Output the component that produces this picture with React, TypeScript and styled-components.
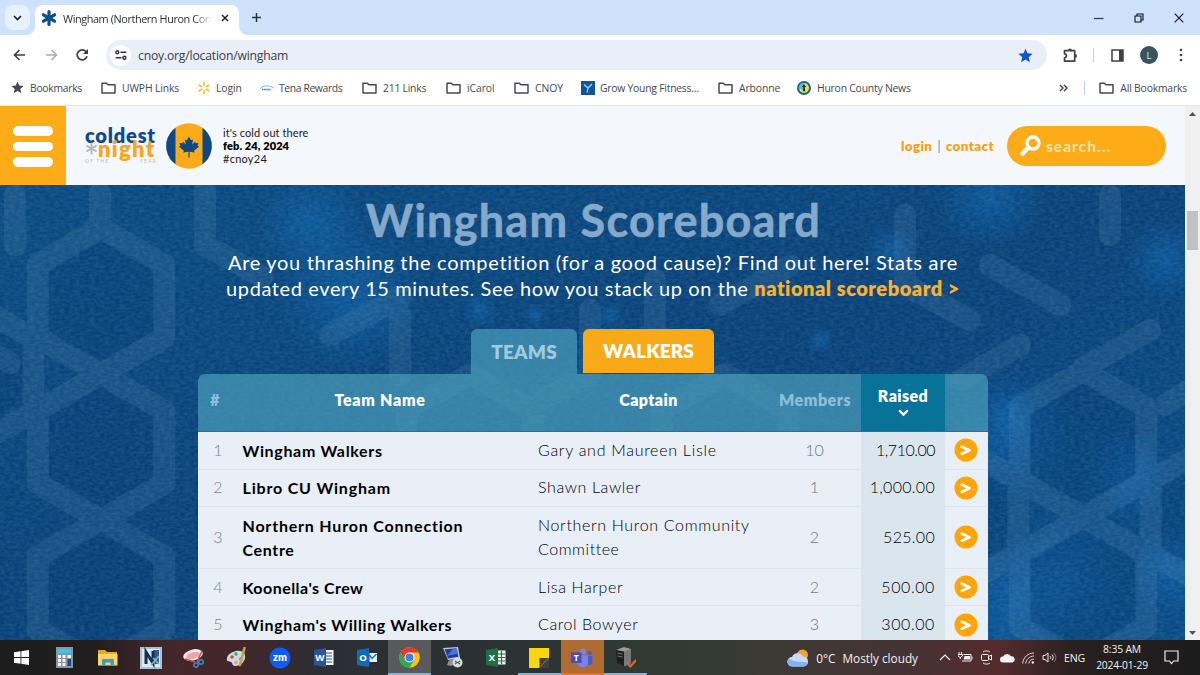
import React from "react";
import styled, { createGlobalStyle } from "styled-components";

const Global = createGlobalStyle`
  * { box-sizing: border-box; }
  body { margin: 0; overflow: hidden; font-family: "Open Sans", "Noto Sans", sans-serif; }
  svg { display: block; flex: none; }
`;

const Screen = styled.div`
  width: 1200px; height: 675px; display: flex; flex-direction: column; overflow: hidden; background: #fff;
`;
const Label = styled.span<{ $ls?: number }>`
  letter-spacing: ${(p) => p.$ls ?? 0}px; white-space: nowrap;
`;

/* ---------- browser chrome ---------- */
const TabStrip = styled.div`
  height: 35px; flex: none; background: #cee2fc; display: flex; align-items: flex-end; padding-left: 5px;
`;
const TabSearch = styled.div`
  width: 25px; height: 25px; margin-bottom: 5px; border-radius: 8px; background: #e8f1fe;
  display: flex; align-items: center; justify-content: center;
`;
const BrowserTab = styled.div`
  position: relative; margin-left: 5px; width: 204px; height: 30px; border-radius: 8px 8px 0 0; background: #fff;
  display: flex; align-items: center; padding: 0 10px 4px 6px;
  &::before, &::after {
    content: ""; position: absolute; bottom: 0; width: 8px; height: 8px;
  }
  &::before { left: -8px; background: radial-gradient(circle at 0 0, transparent 7.5px, #fff 8px); }
  &::after { right: -8px; background: radial-gradient(circle at 100% 0, transparent 7.5px, #fff 8px); }
`;
const TabTitle = styled.div`
  margin-left: 6px; width: 149px; white-space: nowrap; font-size: 10.9px; color: #2b2f33;
  mask-image: linear-gradient(90deg, #000 88%, transparent 100%);
`;
const TabClose = styled.div` margin-left: auto; `;
const NewTab = styled.div` margin: 0 0 12px 12px; `;
const WindowButtons = styled.div`
  margin-left: auto; display: flex; gap: 30px; align-items: center; padding: 0 16px 12px 0;
`;

const Toolbar = styled.div`
  height: 35px; flex: none; display: flex; align-items: center; padding: 5px 17px 0 12px;
`;
const NavButtons = styled.div` display: flex; gap: 15.5px; width: 94px; align-items: center; `;
const Omnibox = styled.div`
  width: 941px; flex: none; height: 30px; border-radius: 15px; background: #e9eef8; display: flex; align-items: center;
  padding: 0 14px 0 4px; font-size: 12.2px; color: #3c4045;
`;
const SiteInfo = styled.div`
  width: 21px; height: 21px; border-radius: 50%; background: #fff; display: flex; align-items: center;
  justify-content: center; margin-right: 7px;
`;
const StarSlot = styled.div` margin-left: auto; `;
const ToolIcons = styled.div` margin-left: auto; display: flex; align-items: center; `;
const Sep = styled.div<{ $l: number; $r: number }>`
  width: 1px; height: 14px; background: #b9d5f5; margin: 0 ${(p) => p.$r}px 0 ${(p) => p.$l}px;
`;
const Avatar = styled.div`
  width: 18px; height: 18px; border-radius: 50%; background: #37555e; color: #dfe9ec; font-size: 9.5px;
  display: flex; align-items: center; justify-content: center; margin: 0 21px 0 16px;
`;

const BookmarkBar = styled.div`
  height: 36px; flex: none; display: flex; align-items: center; padding: 0 13px 0 11px;
  border-bottom: 1px solid #e3e5e8; font-size: 10.4px; color: #45494d;
`;
const Bookmark = styled.div<{ $w?: number; $gap?: number }>`
  width: ${(p) => (p.$w ? p.$w + "px" : "auto")}; display: flex; align-items: center; gap: ${(p) => p.$gap ?? 6}px;
`;
const BookmarkEnd = styled.div` margin-left: auto; display: flex; align-items: center; `;

/* ---------- web page ---------- */
const Viewport = styled.div` height: 534px; flex: none; display: flex; overflow: hidden; `;
const Page = styled.div` position: relative; width: 1185px; height: 534px; overflow: hidden; `;
const Backdrop = styled.svg` position: absolute; left: 0; top: 79px; `;
const Scrollbar = styled.div`
  width: 15px; background: #f0f0f0; display: flex; flex-direction: column; align-items: center; padding: 6px 0 5px;
`;
const Thumb = styled.div` width: 11px; height: 39px; margin-top: 95px; margin-bottom: auto; background: #c1c1c1; `;

const SiteHeader = styled.header`
  position: relative; height: 79px; background: #f4f7fb; display: flex; align-items: center; padding-right: 19px;
  font-family: Lato, sans-serif;
`;
const MenuButton = styled.div`
  width: 66px; height: 79px; background: #fdac17; display: flex; flex-direction: column; align-items: center;
  gap: 6px; padding-top: 20px;
`;
const MenuBar = styled.div` width: 40px; height: 9.5px; border-radius: 5px; background: #fff; `;
const Logo = styled.div`
  margin-left: 19px; width: 72px; height: 44px; display: flex; flex-direction: column;
`;
const LogoTop = styled.div`
  font-size: 20px; line-height: 22px; height: 17px; font-weight: 800; color: #0d4a8b;
`;
const LogoMid = styled.div`
  height: 16px; display: flex; align-items: center; font-size: 22px; line-height: 16px; font-weight: 800; color: #f9a61d;
`;
const LogoSub = styled.div`
  display: flex; justify-content: space-between; font-size: 4.8px; line-height: 8px; color: #b9bcc0;
`;
const Flag = styled.svg` margin-left: 9px; `;
const Tagline = styled.div`
  margin-left: 11px; font-size: 11px; line-height: 13px; color: #1b1b1b; display: flex; flex-direction: column;
  b { font-weight: 800; color: #000; }
`;
const Account = styled.div`
  margin-left: auto; display: flex; gap: 5px; font-size: 13.5px; font-weight: 800; color: #f5a11a; margin-right: 13px;
  i { font-style: normal; font-weight: 400; color: #34a5c9; }
`;
const Search = styled.div`
  width: 159px; height: 40px; border-radius: 20px; background: #fdac17; display: flex; align-items: center;
  padding-left: 13px; gap: 5px; font-size: 15.5px; font-weight: 700; color: #fee3ae;
`;

const Board = styled.section`
  position: relative; width: 1185px; display: flex; flex-direction: column; align-items: center;
  font-family: Lato, sans-serif; color: #fff;
`;
const Title = styled.h1`
  margin: 7px 0 0; padding-left: 2px; font-size: 45px; line-height: 56px; height: 56px; font-weight: 700; color: #84a9ca;
  -webkit-text-stroke: 0.6px #84a9ca;
`;
const Intro = styled.p`
  margin: 1px 0 0; padding-left: 1px; font-size: 20px; line-height: 26.2px; text-align: center; display: flex; flex-direction: column;
  b { font-weight: 800; color: #fdb02a; letter-spacing: 0.52px; }
`;
const Tabs = styled.div` margin-top: 27.6px; height: 45px; display: flex; gap: 6px; `;
const Tab = styled.div<{ $active?: boolean; $w: number }>`
  width: ${(p) => p.$w}px; height: ${(p) => (p.$active ? 44 : 45)}px; border-radius: 6px 6px 0 0; display: flex;
  align-items: center; justify-content: center; font-size: 19px; font-weight: 800; padding-bottom: 1px;
  background: ${(p) => (p.$active ? "rgba(255,172,20,.97)" : "rgba(74,158,187,.7)")};
  color: ${(p) => (p.$active ? "#fff" : "#a3c9de")};
`;
const Table = styled.div` width: 790px; border-radius: 7px 7px 0 0; overflow: hidden; `;
const columns = "34px 296px 241px 92px 84px 43px";
const HeadRow = styled.div`
  height: 58px; display: grid; grid-template-columns: ${columns}; background: rgba(74,158,187,.7);
  border-bottom: 1px solid #2a6e9a; font-size: 16px; font-weight: 800;
`;
const Head = styled.div<{ $muted?: boolean; $sorted?: boolean }>`
  display: flex; flex-direction: column; align-items: center; justify-content: center;
  padding-left: 1px; padding-bottom: ${(p) => (p.$sorted ? 3 : 6)}px; gap: 4px;
  color: ${(p) => (p.$muted ? "#8fbfd6" : "#fff")};
  background: ${(p) => (p.$sorted ? "rgba(0,110,150,.85)" : "none")};
`;
const Row = styled.div<{ $h: number }>`
  height: ${(p) => p.$h}px; display: grid; grid-template-columns: ${columns}; background: #e9eff6;
  border-bottom: 1px solid #dbe5ed; color: #23272b; font-size: 16px; line-height: 24px;
`;
const Cell = styled.div<{ $kind: "rank" | "team" | "captain" | "members" | "raised" | "go" }>`
  display: flex; flex-direction: column; justify-content: center; padding-bottom: 1px;
  ${(p) => p.$kind === "rank" && "align-items: flex-end; padding-right: 9px; color: #7d848a; font-weight: 300;"}
  ${(p) => p.$kind === "team" && "padding: 1px 0 0 11px; font-weight: 700; color: #000;"}
  ${(p) => p.$kind === "captain" && "padding-left: 10.5px; font-weight: 300; color: #000;"}
  ${(p) => p.$kind === "members" && "align-items: center; color: #70777d; font-weight: 300;"}
  ${(p) => p.$kind === "raised" && "align-items: flex-end; padding-right: 9.5px; background: #dae6ee; font-weight: 300; color: #000;"}
  ${(p) => p.$kind === "go" && "align-items: center; padding-bottom: 0;"}
`;

/* ---------- taskbar ---------- */
const Taskbar = styled.div`
  height: 35px; flex: none; display: flex; color: #f2f2f2;
  background: linear-gradient(90deg, #1d1d1d 0, #201e1e 90px, #42272a 165px, #452529 230px, #2c2e33 320px, #2b3132 480px,
    #313b34 680px, #3e3935 790px, #443334 900px, #552b2d 1000px, #261f1f 1080px, #1c1c1c 1200px);
`;
const TaskButton = styled.div<{ $bg?: string; $line?: string }>`
  width: 43.15px; flex: none; height: 35px; display: flex; align-items: center; justify-content: center;
  background: ${(p) => p.$bg ?? "none"};
  box-shadow: ${(p) => (p.$line ? `inset 0 -2px 0 ${p.$line}` : "none")};
`;
const Tray = styled.div` margin-left: auto; display: flex; align-items: center; padding-right: 21px; `;
const Weather = styled.div`
  display: flex; align-items: center; gap: 7px; font-size: 11.8px; margin-right: 21px;
`;
const TrayIcons = styled.div` display: flex; align-items: center; gap: 7px; font-size: 10.6px; `;
const Clock = styled.div`
  width: 60px; margin: 0 12px 0 7px; display: flex; flex-direction: column; align-items: center;
  font-size: 10.3px; line-height: 15.5px;
`;

/* ---------- icons ---------- */
const Folder = () => (
  <svg width="15" height="12" viewBox="0 0 15 12"><path d="M1 1.2h4.4l1.5 1.6H14v8.2H1z" fill="none" stroke="#474a4d" strokeWidth="1.5" strokeLinejoin="round" /></svg>
);
const Star = ({ size, fill }: { size: number; fill: string }) => (
  <svg width={size} height={size} viewBox="0 0 24 24"><path fill={fill} d="M12 1l3.2 7.5 8.1.7-6.1 5.4 1.8 8L12 18.4 5 22.6l1.800-8L.7 9.200l8.100-.7z" /></svg>
);
const Burst = ({ size, color, w, n, inner = 0 }: { size: number; color: string; w: number; n: number; inner?: number }) => (
  <svg width={size} height={size} viewBox="-10 -10 20 20" stroke={color} strokeWidth={w} strokeLinecap="round">
    {Array.from({ length: n }, (_, i) => <path key={i} d={`M0 ${-inner}V-8`} transform={`rotate(${(360 / n) * i})`} />)}
  </svg>
);
const Go = () => (
  <svg width="24" height="24" viewBox="0 0 24 24"><circle cx="12" cy="12" r="11.5" fill="#ffa50a" /><path d="M7.800 8.700l7.700 3.500-7.700 3.500" fill="none" stroke="#fff" strokeWidth="2.7" strokeLinecap="round" strokeLinejoin="round" /></svg>
);

const hex = (cx: number, cy: number, r: number) =>
  Array.from({ length: 6 }, (_, i) => {
    const a = (Math.PI / 3) * i + Math.PI / 6;
    return `${cx + r * Math.cos(a)},${cy + r * Math.sin(a)}`;
  }).join(" ");
const hexes = [
  [101, 116], [101, 262], [-30, 190], [101, 408], [470, 262], [725, 262], [1083, 259], [1083, 405], [1214, 332], [955, 332],
];
const spokes = [
  [38, 80, 100, 42], [100, 42, 100, 8], [205, 5, 205, 60], [205, 60, 262, 92], [330, 150, 400, 112], [400, 190, 400, 130],
  [590, 125, 590, 190], [655, 95, 655, 160], [545, 213, 590, 190], [905, 30, 905, 100], [905, 100, 970, 135],
  [990, 80, 1060, 120], [1110, 10, 1110, 50], [10, 178, -20, 160], [1165, 220, 1190, 205], [1083, 183, 1150, 145],
  [720, 120, 790, 80], [1020, 160, 960, 195], [15, 10, 15, 60],
];
const glows = [
  [990, 10, 55], [890, 65, 26], [820, 155, 14], [610, 130, 13], [535, 130, 12], [480, 125, 18], [350, 110, 75], [310, 40, 55],
  [1165, 75, 40], [1010, 250, 65], [1060, 390, 60], [1170, 385, 45], [1010, 420, 70], [1130, 290, 45], [1010, 230, 24],
];
const Background = () => (
  <Backdrop width="1185" height="455" viewBox="0 0 1185 455">
    <defs>
      <linearGradient id="base" x1="0" y1="0" x2="1" y2="1">
        <stop offset="0" stopColor="#074880" /><stop offset=".5" stopColor="#054077" /><stop offset="1" stopColor="#074985" />
      </linearGradient>
      <radialGradient id="glow"><stop offset="0" stopColor="#0c63ad" stopOpacity=".6" /><stop offset="1" stopColor="#0c63ad" stopOpacity="0" /></radialGradient>
      <filter id="grain" x="0" y="0" width="100%" height="100%">
        <feTurbulence type="fractalNoise" baseFrequency=".2 .36" numOctaves="3" seed="4" />
        <feColorMatrix values="0 0 0 0 .5  0 0 0 0 .66  0 0 0 0 .8  1.1 0 0 0 -.28" />
      </filter>
    </defs>
    <rect width="1185" height="455" fill="url(#base)" />
    {glows.map(([x, y, r], i) => <circle key={i} cx={x} cy={y} r={r} fill="url(#glow)" />)}
    <g fill="#043c72" fillOpacity=".35">
      {hexes.map(([x, y], i) => <polygon key={i} points={hex(x, y, 62)} />)}
    </g>
    <g fill="none" stroke="#6d9cc2" opacity=".15" strokeWidth="22" strokeLinejoin="round" strokeLinecap="round">
      {hexes.map(([x, y], i) => <polygon key={i} points={hex(x, y, 73)} />)}
      {spokes.map(([a, b, c, d], i) => <path key={i} d={`M${a} ${b}L${c} ${d}`} />)}
    </g>
    <rect width="1185" height="455" filter="url(#grain)" opacity=".2" />
  </Backdrop>
);

type Entry = { team: [string, number][]; captain: [string, number][]; members: string; raised: string; track: number; h: number };
const entries: Entry[] = [
  { team: [["Wingham Walkers", 0.66]], captain: [["Gary and Maureen Lisle", 0.72]], members: "10", raised: "1,710.00", track: -0.5, h: 37.6 },
  { team: [["Libro CU Wingham", 0.82]], captain: [["Shawn Lawler", 0.6]], members: "1", raised: "1,000.00", track: 0.3, h: 37.6 },
  { team: [["Northern Huron Connection", 0.8], ["Centre", 0.65]], captain: [["Northern Huron Community", 0.66], ["Committee", 0.55]], members: "2", raised: "525.00", track: 0.3, h: 61.6 },
  { team: [["Koonella's Crew", 0.47]], captain: [["Lisa Harper", 0.6]], members: "2", raised: "500.00", track: 0.6, h: 37.6 },
  { team: [["Wingham's Willing Walkers", 0.62]], captain: [["Carol Bowyer", 0.58]], members: "3", raised: "300.00", track: 0.6, h: 37.6 },
];

export default function App() {
  return (
    <Screen>
      <Global />
      <TabStrip>
        <TabSearch><svg width="9" height="6" viewBox="0 0 9 6"><path d="M1 1l3.500 3.500L8 1" fill="none" stroke="#202124" strokeWidth="1.7" /></svg></TabSearch>
        <BrowserTab>
          <Burst size={16} color="#0b4f8f" w={4} n={6} />
          <TabTitle><Label $ls={-0.42}>Wingham (Northern Huron Con</Label></TabTitle>
          <TabClose><svg width="8" height="8" viewBox="0 0 8 8"><path d="M1 1l6 6M7 1L1 7" stroke="#222" strokeWidth="1.5" /></svg></TabClose>
        </BrowserTab>
        <NewTab><svg width="11" height="11" viewBox="0 0 11 11"><path d="M5.500 1v9M1 5.500h9" stroke="#2d3135" strokeWidth="1.500" /></svg></NewTab>
        <WindowButtons>
          <svg width="10" height="10" viewBox="0 0 10 10"><path d="M0 5.500h9.500" stroke="#2d3a4a" strokeWidth="1.200" /></svg>
          <svg width="10" height="10" viewBox="0 0 10 10"><path d="M1 3h6v6H1zM3 3V1h6v6H7" fill="none" stroke="#111" strokeWidth="1.100" /></svg>
          <svg width="10" height="10" viewBox="0 0 10 10"><path d="M.7.7l8.600 8.600M9.300.7L.7 9.300" stroke="#111" strokeWidth="1.100" /></svg>
        </WindowButtons>
      </TabStrip>

      <Toolbar>
        <NavButtons>
          <svg width="16" height="14" viewBox="0 0 16 14"><path d="M13 7H2.500M7.500 2l-5 5 5 5" fill="none" stroke="#3c4043" strokeWidth="1.600" /></svg>
          <svg width="16" height="14" viewBox="0 0 16 14"><path d="M2 7h10.500M7.500 2l5 5-5 5" fill="none" stroke="#a8abae" strokeWidth="1.600" /></svg>
          <svg width="15" height="14" viewBox="0 0 15 14"><path d="M12 8.200A5 5 0 1 1 10.800 3.400L12.300 5" fill="none" stroke="#3c4043" strokeWidth="1.700" /><path d="M13 1v5H8z" fill="#3c4043" /></svg>
        </NavButtons>
        <Omnibox>
          <SiteInfo>
            <svg width="12" height="10" viewBox="0 0 12 10" fill="none" stroke="#303438" strokeWidth="1.400"><circle cx="2.300" cy="2.300" r="1.500" /><path d="M5.500 2.300h5.800M.7 7.700h5.800" /><circle cx="9.400" cy="7.700" r="1.500" /></svg>
          </SiteInfo>
          <Label $ls={-0.2}>cnoy.org/location/wingham</Label>
          <StarSlot><Star size={15} fill="#0b57d0" /></StarSlot>
        </Omnibox>
        <ToolIcons>
          <svg width="15" height="15" viewBox="0 0 15 15"><path d="M1.500 2.600h3.700h6.500v10.600H1.500V9.800c2.600-.3 2.600-3.600 0-3.900z" fill="none" stroke="#3f4347" strokeWidth="1.700" strokeLinejoin="round" /><path d="M5 2.500a2 2 0 0 1 4 0zM12 6a2 2 0 0 1 0 4z" fill="#3f4347" /></svg>
          <Sep $l={15} $r={17} />
          <svg width="13" height="13" viewBox="0 0 13 13"><path d="M1 1h11v11H1z" fill="none" stroke="#3f4347" strokeWidth="1.500" /><path d="M8 1h4v11H8z" fill="#3f4347" /></svg>
          <Avatar>L</Avatar>
          <svg width="4" height="14" viewBox="0 0 4 14" fill="#3f4347"><circle cx="2" cy="2" r="1.300" /><circle cx="2" cy="7" r="1.300" /><circle cx="2" cy="12" r="1.300" /></svg>
        </ToolIcons>
      </Toolbar>

      <BookmarkBar>
        <Bookmark $w={90}><Star size={13} fill="#4a4d50" /><Label $ls={-0.3}>Bookmarks</Label></Bookmark>
        <Bookmark $w={96}><Folder /><Label $ls={-0.15}>UWPH Links</Label></Bookmark>
        <Bookmark $w={63} $gap={5}><Burst size={14} color="#fbc02d" w={2.6} n={6} inner={4} /><Label $ls={-0.1}>Login</Label></Bookmark>
        <Bookmark $w={102} $gap={5}>
          <svg width="14" height="8" viewBox="0 0 14 8" fill="none"><path d="M0 5c3-4 9-4 14-1" stroke="#7ab8dd" /><path d="M2 5.500h9" stroke="#2878b4" strokeWidth="1.500" strokeDasharray="1.500 .6" /></svg>
          <Label $ls={-0.4}>Tena Rewards</Label>
        </Bookmark>
        <Bookmark $w={84}><Folder /><Label $ls={-0.25}>211 Links</Label></Bookmark>
        <Bookmark $w={68}><Folder /><Label $ls={-0.1}>iCarol</Label></Bookmark>
        <Bookmark $w={67}><Folder /><Label $ls={-0.1}>CNOY</Label></Bookmark>
        <Bookmark $w={137} $gap={5}>
          <svg width="14" height="14" viewBox="0 0 14 14"><path fill="#12549b" d="M0 0h14v14H0z" /><path d="M3 3.500l4 3.500 4-4M7 7l-.8 4.500" fill="none" stroke="#8fd8ef" strokeWidth="1.400" /></svg>
          <Label $ls={-0.25}>Grow Young Fitness...</Label>
        </Bookmark>
        <Bookmark $w={79}><Folder /><Label $ls={-0.12}>Arbonne</Label></Bookmark>
        <Bookmark $gap={6}>
          <svg width="14" height="14" viewBox="0 0 14 14"><circle cx="7" cy="7" r="7" fill="#17639c" /><circle cx="7" cy="7" r="5" fill="#f3dc4c" /><path d="M2 7a5 5 0 0 1 5-5v8z" fill="#4fc3dc" /><path d="M7 3l2 3-1.200.2.4 4H6l.4-4L5 6z" fill="#10222c" /></svg>
          <Label $ls={-0.22}>Huron County News</Label>
        </Bookmark>
        <BookmarkEnd>
          <svg width="9" height="8" viewBox="0 0 9 8"><path d="M1 1l3 3-3 3M5 1l3 3-3 3" fill="none" stroke="#3f4347" strokeWidth="1.400" /></svg>
          <Sep $l={16} $r={14} />
          <Bookmark><Folder /><Label $ls={-0.2}>All Bookmarks</Label></Bookmark>
        </BookmarkEnd>
      </BookmarkBar>

      <Viewport>
        <Page>
          <Background />
          <SiteHeader>
            <MenuButton><MenuBar /><MenuBar /><MenuBar /></MenuButton>
            <Logo>
              <LogoTop><Label $ls={0.8}>coldest</Label></LogoTop>
              <LogoMid><Burst size={13} color="#b5b8bd" w={2.8} n={6} /><Label $ls={1.3}>night</Label></LogoMid>
              <LogoSub><Label $ls={1.3}>OF THE</Label><Label $ls={1.3}>YEAR</Label></LogoSub>
            </Logo>
            <Flag width="46" height="46" viewBox="0 0 46 46">
              <clipPath id="disc"><circle cx="23" cy="23" r="22.800" /></clipPath>
              <g clipPath="url(#disc)"><path fill="#fbaa19" d="M0 0h46v46H0z" /><path fill="#0d4a85" d="M0 0h9.500v46H0zM36.500 0H46v46h-9.500z" /></g>
              <path fill="#0d4a85" d="M23 13.500l2 3.800 2-.9-.8 5 2.800-2.700.7 1.600 2.800-.4-.9 2.800 1.500.9-5 4.200.6 1.700-5.200-.7.100 5.700h-1.200l.100-5.700-5.200.7.600-1.700-5-4.200 1.500-.9-.9-2.800 2.800.4.700-1.600 2.800 2.700-.8-5 2 .9z" />
            </Flag>
            <Tagline><Label $ls={0.08}>it's cold out there</Label><b><Label $ls={0.1}>feb. 24, 2024</Label></b><Label $ls={0.25}>#cnoy24</Label></Tagline>
            <Account><Label $ls={0.3}>login</Label><i>|</i><Label $ls={0.35}>contact</Label></Account>
            <Search>
              <svg width="21" height="21" viewBox="0 0 21 21" fill="none" stroke="#fff"><circle cx="13" cy="8" r="6" strokeWidth="3.400" /><path d="M8 13l-5.500 5.500" strokeWidth="4.500" strokeLinecap="round" /></svg>
              <Label $ls={1.05}>search...</Label>
            </Search>
          </SiteHeader>

          <Board>
            <Title><Label $ls={1.25}>Wingham Scoreboard</Label></Title>
            <Intro>
              <Label $ls={0.69}>Are you thrashing the competition (for a good cause)? Find out here! Stats are</Label>
              <Label $ls={0.61}>updated every 15 minutes. See how you stack up on the <b>national scoreboard &gt;</b></Label>
            </Intro>
            <Tabs>
              <Tab $w={106}><Label $ls={0.2}>TEAMS</Label></Tab>
              <Tab $w={131} $active><Label $ls={0.1}>WALKERS</Label></Tab>
            </Tabs>
            <Table>
              <HeadRow>
                <Head $muted><Label>#</Label></Head>
                <Head><Label $ls={0.7}>Team Name</Label></Head>
                <Head><Label $ls={0.4}>Captain</Label></Head>
                <Head $muted><Label $ls={0.55}>Members</Label></Head>
                <Head $sorted>
                  <Label $ls={0.4}>Raised</Label>
                  <svg width="11" height="8" viewBox="0 0 11 8"><path d="M1.800 2l3.700 3.500L9.200 2" fill="none" stroke="#fff" strokeWidth="2.400" strokeLinecap="round" /></svg>
                </Head>
                <Head />
              </HeadRow>
              {entries.map((e, i) => (
                <Row key={i} $h={e.h}>
                  <Cell $kind="rank">{i + 1}</Cell>
                  <Cell $kind="team">{e.team.map(([t, s]) => <Label key={t} $ls={s}>{t}</Label>)}</Cell>
                  <Cell $kind="captain">{e.captain.map(([t, s]) => <Label key={t} $ls={s}>{t}</Label>)}</Cell>
                  <Cell $kind="members">{e.members}</Cell>
                  <Cell $kind="raised"><Label $ls={e.track}>{e.raised}</Label></Cell>
                  <Cell $kind="go"><Go /></Cell>
                </Row>
              ))}
            </Table>
          </Board>
        </Page>
        <Scrollbar>
          <svg width="7" height="4" viewBox="0 0 7 4"><path d="M0 4l3.500-4L7 4z" fill="#505050" /></svg>
          <Thumb />
          <svg width="7" height="4" viewBox="0 0 7 4"><path d="M0 0l3.500 4L7 0z" fill="#505050" /></svg>
        </Scrollbar>
      </Viewport>

      <Taskbar>
        <TaskButton><svg width="15" height="15" viewBox="0 0 15 15" fill="#fff"><path d="M0 2.200L6.500 1.300v5.800H0zM7.300 1.200L15 0v7.100H7.300zM0 7.900h6.500v5.800L0 12.800zM7.300 7.900H15V15l-7.700-1.200z" /></svg></TaskButton>
        <TaskButton><svg width="17" height="21" viewBox="0 0 17 21"><path fill="#8c959c" d="M0 0h17v21H0z" /><path fill="#3cc3f0" d="M2 2h13v4H2z" /><path fill="#f0f2f3" d="M2 8h3v3H2zM6.500 8h3v3h-3zM2 12h3v3H2zM6.500 12h3v3h-3zM2 16h3v3H2zM6.500 16h3v3h-3zM11.500 8h3.500v3h-3.500z" /><path fill="#174a86" d="M11.500 12H15v7h-3.500z" /></svg></TaskButton>
        <TaskButton><svg width="20" height="17" viewBox="0 0 20 17"><path fill="#e7a72c" d="M0 1h7l2 2h10v13H0z" /><path fill="#fdd563" d="M0 5h19.500v11.500H0z" /><path fill="#3a9ad9" d="M4 17V10h12v7h-3.500v-3.500h-5V17z" /></svg></TaskButton>
        <TaskButton><svg width="22" height="22" viewBox="0 0 22 22"><path fill="#a9c3d6" d="M0 0h22v22H0z" /><path fill="#dce9f2" d="M2 2h18v18H2z" /><path d="M13 3h6v14h-4z" fill="#2f5f8a" /><path d="M6 17V5l7 11V4" fill="none" stroke="#12324f" strokeWidth="3" /><path d="M11 18l8-9M13 11l6 6" stroke="#8fb4cf" strokeWidth="1.500" /></svg></TaskButton>
        <TaskButton><svg width="22" height="20" viewBox="0 0 22 20"><ellipse cx="10" cy="7" rx="10" ry="5.500" fill="#f3e9e9" transform="rotate(-15 10 7)" /><ellipse cx="10" cy="7.500" rx="7" ry="3.400" fill="#e0adad" transform="rotate(-15 10 7)" /><path d="M2 11l10 3M19 3l-5 11" stroke="#d4474b" strokeWidth="1.500" /><g fill="none" stroke="#4080b5" strokeWidth="1.700"><circle cx="18" cy="14" r="2.200" /><circle cx="13" cy="17" r="2.200" /></g></svg></TaskButton>
        <TaskButton><svg width="22" height="21" viewBox="0 0 22 21"><path d="M10 4c6-1 10 2 9 7s-5 8-10 8c-3 0-2-3-4-4s-5 0-4-4 5-6 9-7z" fill="#c9dcea" /><g><circle cx="6" cy="10" r="1.800" fill="#d84b44" /><circle cx="10" cy="7" r="1.700" fill="#45a750" /><circle cx="15" cy="12" r="1.800" fill="#317fcf" /><circle cx="10" cy="15.500" r="1.800" fill="#efad2c" /></g><path d="M18.500 1L14 18" stroke="#d79a4c" strokeWidth="2.600" strokeLinecap="round" /></svg></TaskButton>
        <TaskButton><svg width="22" height="22" viewBox="0 0 22 22"><circle cx="11" cy="11" r="10.500" fill="#0b5cff" /><text x="11" y="14.300" textAnchor="middle" fontFamily="Lato" fontWeight="800" fontSize="10.500" fill="#fff">zm</text></svg></TaskButton>
        <TaskButton><svg width="20" height="19" viewBox="0 0 20 19"><path fill="#f4f7fb" d="M10 2h9.500v15H10z" /><path d="M12 5h6M12 8h6M12 11h6M12 14h6" stroke="#2b579a" strokeWidth="1.200" /><path fill="#2b579a" d="M0 2l12-2v19L0 17z" /><text x="5.800" y="13" textAnchor="middle" fontFamily="Open Sans" fontWeight="700" fontSize="9.500" fill="#fff">W</text></svg></TaskButton>
        <TaskButton><svg width="20" height="19" viewBox="0 0 20 19"><path fill="#0f6cbd" d="M0 2l12-2v19L0 17z" /><path fill="#e8f1fa" d="M12.500 5H20v9h-7.500z" /><path d="M12.500 7l2.500 3.500L19.500 6" fill="none" stroke="#0f6cbd" strokeWidth="1.300" /><text x="6" y="13" textAnchor="middle" fontFamily="Open Sans" fontWeight="700" fontSize="9.500" fill="#fff">O</text></svg></TaskButton>
        <TaskButton $bg="#57595b" $line="#76b5e5"><svg width="21" height="21" viewBox="-10.500 -10.500 21 21"><circle r="10.300" fill="#fbc116" /><path d="M-9 -5A10.300 10.300 0 0 1 9 -5H0L-4.500 2.500z" fill="#e33b2e" /><path d="M-9 -5A10.300 10.300 0 0 0 0 10.300L4.500 2.500-4.500 2.500z" fill="#2da94f" /><circle r="5" fill="#fff" /><circle r="4" fill="#3f7fe8" /></svg></TaskButton>
        <TaskButton><svg width="21" height="21" viewBox="0 0 21 21"><path fill="#c9cdd2" d="M1 1l15-1 2 11-12 2z" /><path fill="#1b3fa8" d="M2.500 2.200l12-.9 2 8.500L6 11.500z" /><path d="M5 9l6-7 4-.5 1 5z" fill="#4d74d6" /><path fill="#8d9198" d="M7 13l9-2 1 4-8 4-4-1z" /><circle cx="15.500" cy="15.500" r="5" fill="#d9dcdf" /><path d="M13 14l2 1.500-2 1.500M18 14l-2 1.500 2 1.500" fill="none" stroke="#4b5a52" strokeWidth="1.100" /></svg></TaskButton>
        <TaskButton><svg width="20" height="19" viewBox="0 0 20 19"><path fill="#eef5f0" d="M11 2.500h8.500v14H11z" /><path d="M15.500 3v13M12 6h7M12 9.500h7M12 13h7" stroke="#1d7044" strokeWidth="1.100" /><path fill="#1d7044" d="M0 2l12-2v19L0 17z" /><text x="6" y="13" textAnchor="middle" fontFamily="Open Sans" fontWeight="700" fontSize="9.500" fill="#fff">X</text></svg></TaskButton>
        <TaskButton $line="#76b5e5"><svg width="20" height="20" viewBox="0 0 20 20"><path fill="#fbd60a" d="M0 0h20v10l-9.500 10H0z" /><path fill="#40413c" d="M20 10v10h-9.500z" /><path fill="#40413c" d="M10.500 10H20l-9.500 10z" /><path d="M10.500 19.500L19.500 10" stroke="#77775f" /></svg></TaskButton>
        <TaskButton $bg="#ae6b32" $line="#e8731a"><svg width="22" height="20" viewBox="0 0 22 20"><circle cx="12" cy="3.500" r="3" fill="#7b83eb" /><circle cx="18.500" cy="5" r="2.200" fill="#5059c9" /><path fill="#5059c9" d="M14 8h7.500v6c0 2-2 3.500-4.500 3z" /><path fill="#7b83eb" d="M6 7.500h11V14c0 7-10 7-11 0z" /><path fill="#464eb8" d="M0 4.500h10.500V15H0z" /><text x="5.200" y="13" textAnchor="middle" fontFamily="Open Sans" fontWeight="700" fontSize="8.500" fill="#fff">T</text></svg></TaskButton>
        <TaskButton $line="#76b5e5"><svg width="20" height="21" viewBox="0 0 20 21"><path fill="#9a9b9c" d="M0 3l8-3 7 2v14l-6 3z" /><path fill="#1c1e20" d="M0 3l8 1.500V19L1 16z" /><path fill="#77797b" d="M8 4.500l7-2.500v14l-7 3z" /><path d="M1.500 6l5 1M1.500 9l5 1" stroke="#777" /><path d="M11 16l3.500 3.500L20 13" fill="none" stroke="#e2622b" strokeWidth="2.200" /></svg></TaskButton>

        <Tray>
          <Weather>
            <svg width="22" height="18" viewBox="0 0 22 18"><circle cx="15.500" cy="6" r="5.500" fill="#f5a32a" /><path d="M5 17.500a4.700 4.700 0 0 1 0-9.400 6 6 0 0 1 11-.5 5 5 0 0 1 1 9.900z" fill="#c5dcfa" /><path d="M5 17.500a4.700 4.700 0 0 1-3-8c5 4 12 3 18.500 4a5 5 0 0 1-3.500 4z" fill="#84b3f3" /></svg>
            <Label>0°C</Label><Label>Mostly cloudy</Label>
          </Weather>
          <TrayIcons>
            <svg width="12" height="7" viewBox="0 0 12 7"><path d="M1 6l5-5 5 5" fill="none" stroke="#eee" strokeWidth="1.200" /></svg>
            <svg width="15" height="11" viewBox="0 0 15 11" fill="none" stroke="#eee"><path d="M5.500 2.500H13v6.500H4M14 4.500v3" /><path d="M6.500 4h5.500v3.500H5.500z" fill="#eee" stroke="none" /><path d="M1 0v2M3.500 0v2M0 2.500h4.500v1.500L2.300 5.500 0 4zM2.300 5v2" /></svg>
            <svg width="13" height="15" viewBox="0 0 13 15" fill="none" stroke="#eee"><rect x="1.500" y="4.500" width="7" height="6" rx="1" /><path d="M8.500 6.500l3-1.500v5l-3-1.500M3 2c2-1.500 5-1.500 7 0M3 13c2 1.500 5 1.500 7 0" /></svg>
            <svg width="15" height="10" viewBox="0 0 15 10"><path d="M3 9.500a3 3 0 0 1 0-6 4.500 4.500 0 0 1 8-.2 3.200 3.200 0 0 1 1.500 6.200z" fill="#f3f3f3" /></svg>
            <svg width="13" height="12" viewBox="0 0 13 12" fill="none" stroke="#ddd"><path d="M.7 11.500C1 5.500 6 1 12 1M3.700 11.500C4 7.500 8 4 12 4M6.700 11.500C7 9 9.500 7 12 7" /><circle cx="10.800" cy="10.500" r="1.200" fill="#eee" stroke="none" /></svg>
            <svg width="15" height="11" viewBox="0 0 15 11" fill="none" stroke="#eee"><path d="M1 3.500h2L6 1v9L3 7.500H1z" /><path d="M8 4c.8 1 .8 2 0 3M10 2.500c1.600 2 1.600 4 0 6" /><path d="M12 1c2.400 3 2.400 6 0 9" stroke="#888" /></svg>
            <Label $ls={-0.2}>ENG</Label>
          </TrayIcons>
          <Clock><Label $ls={-0.15}>8:35 AM</Label><Label $ls={-0.2}>2024-01-29</Label></Clock>
          <svg width="15" height="15" viewBox="0 0 15 15"><path d="M1 1h13v10H9.500L7.500 13.500 5.500 11H1z" fill="none" stroke="#eee" strokeWidth="1.200" /></svg>
        </Tray>
      </Taskbar>
    </Screen>
  );
}
